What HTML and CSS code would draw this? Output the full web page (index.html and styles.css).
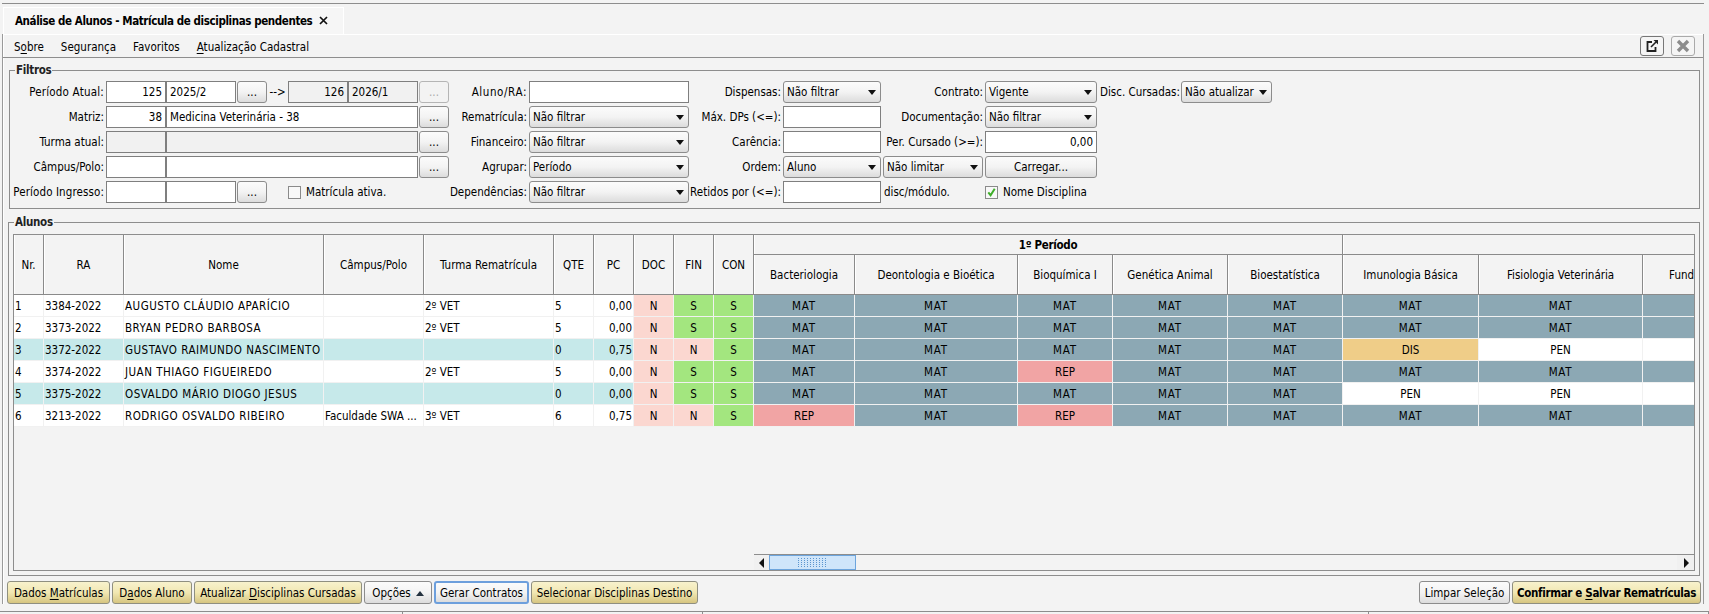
FILE: index.html
```html
<!DOCTYPE html>
<html lang="pt-BR">
<head>
<meta charset="utf-8">
<title>Análise de Alunos</title>
<link rel="stylesheet" href="styles.css">
</head>
<body>
<div class="shell">
  <div class="topline"></div>
  <div class="tabs">
    <div class="tab"><span class="tab-title">Análise de Alunos - Matrícula de disciplinas pendentes</span>
      <svg class="tab-close" viewBox="0 0 9 9" width="9" height="9"><path d="M1 1 8 8M8 1 1 8" stroke="#111" stroke-width="1.7" fill="none"/></svg>
    </div>
  </div>
  <div class="work">
    <div class="menu">
      <span class="menu-item">S<u>o</u>bre</span>
      <span class="menu-item">Segurança</span>
      <span class="menu-item">Favoritos</span>
      <span class="menu-item"><u>A</u>tualização Cadastral</span>
      <div class="win-btns">
        <button class="win-btn"><svg viewBox="0 0 16 16" width="16" height="16"><path d="M8 4H3.5v9h8V9" fill="none" stroke="#222" stroke-width="1.8"/><path d="M7 9 12 4" stroke="#222" stroke-width="1.6"/><path d="M9.5 2H14v4.5z" fill="#222"/></svg></button>
        <button class="win-btn"><svg viewBox="0 0 16 16" width="16" height="16"><path d="M3 3 13 13M13 3 3 13" stroke="#8c8c8c" stroke-width="3.4" fill="none"/></svg></button>
      </div>
    </div>

    <fieldset class="group filtros">
      <legend>Filtros</legend>
      <div class="form">
        <label class="lbl wide">Período Atual:</label>
        <div class="field num">125</div><div class="field">2025/2</div><button class="dots">...</button>
        <span class="arrow">--&gt;</span>
        <div class="field num off">126</div><div class="field off">2026/1</div><button class="dots dis">...</button>
        <label class="lbl wider">Aluno/RA:</label><div class="field"></div>
        <label class="lbl">Dispensas:</label><div class="combo">Não filtrar</div>
        <label class="lbl">Contrato:</label><div class="combo">Vigente</div>
        <label class="lbl tight">Disc. Cursadas:</label><div class="combo">Não atualizar</div>

        <label class="lbl">Matriz:</label>
        <div class="field num">38</div><div class="field s5">Medicina Veterinária - 38</div><button class="dots">...</button>
        <label class="lbl">Rematrícula:</label><div class="combo">Não filtrar</div>
        <label class="lbl">Máx. DPs (&lt;=):</label><div class="field"></div>
        <label class="lbl">Documentação:</label><div class="combo">Não filtrar</div>
        <span class="s2"></span>

        <label class="lbl">Turma atual:</label>
        <div class="field off"></div><div class="field off s5"></div><button class="dots">...</button>
        <label class="lbl">Financeiro:</label><div class="combo">Não filtrar</div>
        <label class="lbl">Carência:</label><div class="field"></div>
        <label class="lbl">Per. Cursado (&gt;=):</label><div class="field num">0,00</div>
        <span class="s2"></span>

        <label class="lbl">Câmpus/Polo:</label>
        <div class="field"></div><div class="field s5"></div><button class="dots">...</button>
        <label class="lbl">Agrupar:</label><div class="combo">Período</div>
        <label class="lbl">Ordem:</label><div class="combo">Aluno</div>
        <div class="combo inset">Não limitar</div>
        <button class="btn load">Carregar...</button>
        <span class="s2"></span>

        <label class="lbl mid">Período Ingresso:</label>
        <div class="field"></div><div class="field"></div><button class="dots">...</button>
        <span></span>
        <div class="check s3"><span class="box"></span>Matrícula ativa.</div>
        <label class="lbl">Dependências:</label><div class="combo">Não filtrar</div>
        <label class="lbl">Retidos por (&lt;=):</label><div class="field"></div>
        <span class="plain">disc/módulo.</span>
        <div class="check"><span class="box"><svg viewBox="0 0 12 12" width="12" height="12"><path d="M2.5 6.5 5 9.5 9.5 2.5" fill="none" stroke="#3fae2a" stroke-width="2.2"/></svg></span>Nome Disciplina</div>
        <span class="s2"></span>
      </div>
    </fieldset>

    <fieldset class="group alunos">
      <legend>Alunos</legend>
      <div class="panel">
        <div class="clip">
          <table class="grid">
            <colgroup>
              <col class="w30"><col class="w80"><col class="w200"><col class="w100"><col class="w130">
              <col class="w40"><col class="w40"><col class="w40"><col class="w40"><col class="w40">
              <col class="w101"><col class="w163"><col class="w95"><col class="w115"><col class="w115">
              <col class="w136"><col class="w164"><col class="w124">
            </colgroup>
            <thead>
              <tr class="h1">
                <th rowspan="2">Nr.</th><th rowspan="2">RA</th><th rowspan="2">Nome</th><th rowspan="2">Câmpus/Polo</th><th rowspan="2">Turma Rematrícula</th>
                <th rowspan="2">QTE</th><th rowspan="2">PC</th><th rowspan="2">DOC</th><th rowspan="2">FIN</th><th rowspan="2">CON</th>
                <th colspan="5" class="period">1º Período</th><th colspan="3"></th>
              </tr>
              <tr class="h2">
                <th>Bacteriologia</th><th>Deontologia e Bioética</th><th>Bioquímica I</th><th>Genética Animal</th><th>Bioestatística</th>
                <th>Imunologia Básica</th><th>Fisiologia Veterinária</th><th class="fund">Fund</th>
              </tr>
            </thead>
            <tbody>
              <tr>
                <td>1</td><td>3384-2022</td><td class="nm">AUGUSTO CLÁUDIO APARÍCIO</td><td></td><td>2º VET</td><td>5</td><td class="r">0,00</td>
                <td class="c no">N</td><td class="c yes">S</td><td class="c yes">S</td>
                <td class="c mat">MAT</td><td class="c mat">MAT</td><td class="c mat">MAT</td><td class="c mat">MAT</td><td class="c mat">MAT</td><td class="c mat">MAT</td><td class="c mat">MAT</td><td class="c mat"></td>
              </tr>
              <tr>
                <td>2</td><td>3373-2022</td><td class="nm">BRYAN PEDRO BARBOSA</td><td></td><td>2º VET</td><td>5</td><td class="r">0,00</td>
                <td class="c no">N</td><td class="c yes">S</td><td class="c yes">S</td>
                <td class="c mat">MAT</td><td class="c mat">MAT</td><td class="c mat">MAT</td><td class="c mat">MAT</td><td class="c mat">MAT</td><td class="c mat">MAT</td><td class="c mat">MAT</td><td class="c mat"></td>
              </tr>
              <tr class="cy">
                <td>3</td><td>3372-2022</td><td class="nm">GUSTAVO RAIMUNDO NASCIMENTO</td><td></td><td></td><td>0</td><td class="r">0,75</td>
                <td class="c no">N</td><td class="c no">N</td><td class="c yes">S</td>
                <td class="c mat">MAT</td><td class="c mat">MAT</td><td class="c mat">MAT</td><td class="c mat">MAT</td><td class="c mat">MAT</td><td class="c dis">DIS</td><td class="c pen">PEN</td><td class="c pen"></td>
              </tr>
              <tr>
                <td>4</td><td>3374-2022</td><td class="nm">JUAN THIAGO FIGUEIREDO</td><td></td><td>2º VET</td><td>5</td><td class="r">0,00</td>
                <td class="c no">N</td><td class="c yes">S</td><td class="c yes">S</td>
                <td class="c mat">MAT</td><td class="c mat">MAT</td><td class="c rep">REP</td><td class="c mat">MAT</td><td class="c mat">MAT</td><td class="c mat">MAT</td><td class="c mat">MAT</td><td class="c mat"></td>
              </tr>
              <tr class="cy">
                <td>5</td><td>3375-2022</td><td class="nm">OSVALDO MÁRIO DIOGO JESUS</td><td></td><td></td><td>0</td><td class="r">0,00</td>
                <td class="c no">N</td><td class="c yes">S</td><td class="c yes">S</td>
                <td class="c mat">MAT</td><td class="c mat">MAT</td><td class="c mat">MAT</td><td class="c mat">MAT</td><td class="c mat">MAT</td><td class="c pen">PEN</td><td class="c pen">PEN</td><td class="c pen"></td>
              </tr>
              <tr>
                <td>6</td><td>3213-2022</td><td class="nm">RODRIGO OSVALDO RIBEIRO</td><td>Faculdade SWA ...</td><td>3º VET</td><td>6</td><td class="r">0,75</td>
                <td class="c no">N</td><td class="c no">N</td><td class="c yes">S</td>
                <td class="c rep">REP</td><td class="c mat">MAT</td><td class="c rep">REP</td><td class="c mat">MAT</td><td class="c mat">MAT</td><td class="c mat">MAT</td><td class="c mat">MAT</td><td class="c mat"></td>
              </tr>
            </tbody>
          </table>
        </div>
        <div class="scroll">
          <span class="sb-btn"><svg viewBox="0 0 6 10" width="6" height="10"><path d="M5 0V10L0 5z" fill="#111"/></svg></span>
          <span class="sb-thumb"><span class="grip"></span></span>
          <span class="sb-track"></span>
          <span class="sb-btn"><svg viewBox="0 0 6 10" width="6" height="10"><path d="M1 0V10L6 5z" fill="#111"/></svg></span>
        </div>
      </div>
    </fieldset>

    <div class="actions">
      <div class="act-left">
        <button class="btn gold b103">Dados <u>M</u>atrículas</button>
        <button class="btn gold b80">D<u>a</u>dos Aluno</button>
        <button class="btn gold b168">Atualizar <u>D</u>isciplinas Cursadas</button>
        <button class="btn b68">Opções<svg class="up" viewBox="0 0 8 5" width="8" height="5"><path d="M4 0 8 5H0z" fill="#24323f"/></svg></button>
        <button class="btn focus b95">Gerar Contratos</button>
        <button class="btn gold b167">Selecionar Disciplinas Destino</button>
      </div>
      <div class="act-right">
        <button class="btn b91">Limpar Seleção</button>
        <button class="btn gold strong b189">Confirmar e <u>S</u>alvar Rematrículas</button>
      </div>
    </div>
  </div>
  <div class="status">
    <span class="st a"></span><span class="st b"></span><span class="st c"></span><span class="st d"></span>
  </div>
</div>
</body>
</html>
```
FILE: styles.css
```css
* { box-sizing: border-box; }
html, body { margin: 0; height: 100%; overflow: hidden; }
body {
  background: #f3f3f3;
  color: #000;
  font-family: "DejaVu Sans", "Noto Sans", sans-serif;
  font-stretch: condensed;
  font-size: 11.5px;
  line-height: 14px;
}
button { font: inherit; color: inherit; margin: 0; padding: 0; }
u { text-underline-offset: 2px; }

.shell { height: 614px; display: flex; flex-direction: column; }
.topline { height: 4px; margin-left: 2px; margin-right: 5px; border-bottom: 1px solid #8d8d8d; flex: none; }
.tabs { height: 30px; padding: 3px 0 0 3px; flex: none; }
.tab {
  width: 341px; height: 27px; background: #f6f6f6;
  border-top: 1px solid #fff; border-right: 1px solid #fff; border-left: 1px solid #fff;
  display: flex; align-items: center; padding-left: 11px; gap: 7px;
}
.tab-title { font-weight: 700; font-size: 11.5px; letter-spacing: -0.4px; white-space: nowrap; }
.tab-close { flex: none; margin-top: -1px; }

.work {
  flex: 1; min-height: 0; display: flex; flex-direction: column;
  margin: 0 5px 0 2px;
  border-left: 1px solid #9a9a9a; border-right: 1px solid #9a9a9a;
  box-shadow: inset 1px 0 0 #fff;
}
.menu {
  flex: none; height: 24px; display: flex; align-items: center; gap: 17px;
  padding: 1px 8px 0 11px;
  border-top: 1px solid #fff; border-bottom: 1px solid #8d8d8d;
}
.menu-item { white-space: nowrap; }
.win-btns { margin-left: auto; display: flex; gap: 7px; margin-top: -1px; }
.win-btn {
  width: 24px; height: 20px; display: flex; align-items: center; justify-content: center;
  background: #f5f5f5; border: 1px solid #777; border-radius: 3px;
}
.win-btn + .win-btn { border-color: #aaa; }

.group {
  margin: 0; min-width: 0; border: 1px solid #8d8d8d; padding: 0;
}
.group legend { margin-left: 5px; padding: 0 1px; font-weight: 700; font-size: 11.5px; letter-spacing: -0.3px; line-height: 14px; color: #222; }
.filtros { flex: none; margin: 5px 3px 0 6px; padding: 4px 0 5px 0; }
.alunos {
  flex: 1; min-height: 0; margin: 6px 3px 0 5px; padding: 5px 4px 4px 4px;
  display: flex; flex-direction: column;
}
.alunos legend { margin-left: 1px; }

.form {
  display: grid;
  grid-template-columns: 96px 60px 70px 31px 21px 60px 70px 31px 80px 160px 94px 98px 104px 112px 84px 91px;
  grid-auto-rows: 22px; row-gap: 3px;
}
.lbl, .plain, .arrow { display: flex; align-items: center; white-space: nowrap; min-width: 0; }
.lbl { justify-content: flex-end; padding-right: 2px; }
.lbl.tight { padding-right: 1px; }
.lbl.mid { letter-spacing: 0.1px; }
.lbl.wide { letter-spacing: 0.2px; }
.lbl.wider { letter-spacing: 0.6px; }
.plain { padding-left: 3px; }
.arrow { justify-content: center; }
.field {
  background: #fff; border: 1px solid #7f7f7f; display: flex; align-items: center;
  padding: 0 3px; white-space: nowrap; overflow: hidden;
}
.field.num { justify-content: flex-end; }
.field.off { background: #f1f1f1; }
.s5 { grid-column: span 5; }
.s3 { grid-column: span 3; }
.s2 { grid-column: span 2; }
.dots, .btn, .combo {
  background: linear-gradient(#fbfbfb 0%, #f3f3f3 50%, #dcdcdc 100%);
  border: 1px solid #8c8c8c; border-radius: 3px;
}
.dots { margin-left: 1px; padding-bottom: 0; }
.dots.dis { color: #aaa; background: #f3f3f3; border-color: #b5b5b5; }
.combo {
  position: relative; display: flex; align-items: center; padding: 0 14px 0 3px; white-space: nowrap; min-width: 0;
}
.combo::after {
  content: ""; position: absolute; right: 4px; top: 8px;
  border-left: 4px solid transparent; border-right: 4px solid transparent; border-top: 5px solid #111;
}
.combo.inset { margin: 0 2px; }
.btn.load { margin: 0; }
.check { display: flex; align-items: center; gap: 5px; white-space: nowrap; }
.box { width: 13px; height: 13px; background: #f8f8f8; border: 1px solid #8a8a8a; display: inline-flex; align-items: center; justify-content: center; flex: none; }

.panel {
  flex: 1; min-height: 0; display: flex; flex-direction: column;
  border: 1px solid #8d8d8d; margin-left: 0;
}
.clip { flex: 1; min-height: 0; overflow: hidden; }
.grid { border-collapse: separate; border-spacing: 0; table-layout: fixed; width: 1753px; }
.w30 { width: 30px; } .w40 { width: 40px; } .w80 { width: 80px; } .w95 { width: 95px; }
.w100 { width: 100px; } .w101 { width: 101px; } .w115 { width: 115px; } .w124 { width: 124px; }
.w130 { width: 130px; } .w136 { width: 136px; } .w163 { width: 163px; } .w164 { width: 164px; } .w200 { width: 200px; }
.grid th {
  background: #f3f3f3; font-weight: 400; text-align: center; padding: 0; white-space: nowrap; overflow: hidden;
  border-right: 1px solid #8a8a8a; border-bottom: 1px solid #8a8a8a;
  box-shadow: inset 1px 0 0 #fff;
}
.grid th.period { font-weight: 700; letter-spacing: -0.3px; }
.grid th.fund { text-align: left; padding-left: 26px; }
.h1 { height: 20px; }
.h2 { height: 40px; }
.grid td {
  height: 22px; padding: 0 1px; white-space: nowrap; overflow: hidden; background: #fff;
  border-right: 1px solid #f1f1f1; border-bottom: 1px solid #f1f1f1;
}
.cy td { background: #c6e9ea; }
.grid td.nm { letter-spacing: 0.5px; }
.grid td.r { text-align: right; }
.grid td.c { text-align: center; }
.grid td.no { background: #fbd7d0; }
.grid td.yes { background: #a3e67f; }
.grid td.mat { background: #8ca8b4; letter-spacing: 0.8px; }
.grid td.rep { background: #f1a4a4; }
.grid td.dis { background: #efcd88; }
.grid td.pen { background: #fff; }

.scroll {
  flex: none; height: 16px; margin-left: 740px; display: flex; align-items: stretch;
  border-top: 1px solid #8d8d8d; background: #f3f3f3;
}
.sb-btn { width: 15px; flex: none; display: flex; align-items: center; justify-content: center; background: #f0f0f0; }
.sb-btn:last-child { width: 17px; }
.sb-thumb {
  width: 87px; flex: none; border: 1px solid #6da5dd; background: #cfe5fa;
  display: flex; align-items: center; justify-content: center;
}
.grip {
  width: 30px; height: 9px;
  background: linear-gradient(90deg, #6c9fd2 1px, transparent 1px) 0 0 / 3px 2px,
              linear-gradient(#cfe5fa 1px, transparent 1px) 0 0 / 3px 2px;
  background-blend-mode: normal;
  background-image: radial-gradient(circle at 0.5px 0.5px, #5b95cf 0.7px, transparent 0.8px);
  background-size: 3px 2px;
}
.sb-track { flex: 1; }

.actions { flex: none; display: flex; justify-content: space-between; margin-top: 5px; padding: 0 2px 0 4px; }
.act-left, .act-right { display: flex; gap: 2px; }
.actions .btn { height: 23px; padding: 0; white-space: nowrap; }
.b68 { width: 68px; } .b80 { width: 80px; } .b91 { width: 91px; } .b95 { width: 95px; }
.b103 { width: 103px; } .b167 { width: 167px; } .b168 { width: 168px; } .b189 { width: 189px; }
.btn.gold {
  background: linear-gradient(#f8f2cd 0%, #f1e7b2 50%, #d6c580 100%);
  border-color: #8f8f80;
}
.btn.focus { border: 2px solid #6d9fdc; border-radius: 3px; }
.btn.strong { font-weight: 700; letter-spacing: -0.33px; }
.up { margin-left: 5px; vertical-align: 1px; }

.status { flex: none; height: 3px; margin: 7px 0 0 0; display: flex; }
.st { border-top: 1px solid #8d8d8d; border-right: 1px solid #8d8d8d; display: block; }
.st.a { width: 403px; } .st.b { width: 300px; } .st.c { width: 666px; } .st.d { flex: 1; }
```
